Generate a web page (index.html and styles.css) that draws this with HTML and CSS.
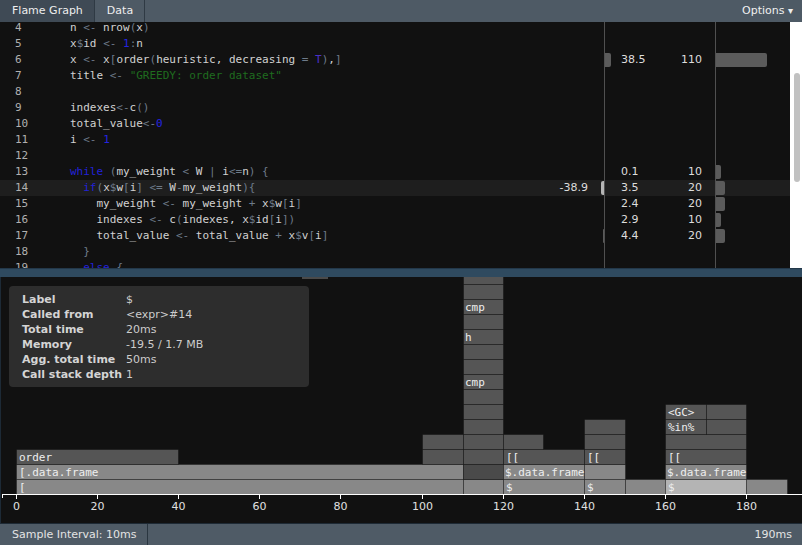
FILE: index.html
```html
<!DOCTYPE html>
<html>
<head>
<meta charset="utf-8">
<title>profvis</title>
<link rel="stylesheet" href="styles.css">
</head>
<body>
<div class="app">
  <header class="topbar">
    <div class="tab active">Flame Graph</div>
    <div class="tab">Data</div>
    <div class="options">Options <span class="caret">▾</span></div>
  </header>

  <section class="code-pane">
    <div class="code-scroll">
      <div class="rows">
        <div class="row"><span class="ln">4</span><span class="code">n <span class="op">&lt;-</span> nrow<span class="op">(</span>x<span class="op">)</span></span><span class="mneg"></span><span class="nbar"></span><span class="pbar"></span><span class="mval"></span><span class="tval"></span><span class="sp"></span><span class="tbar"></span></div>
        <div class="row"><span class="ln">5</span><span class="code">x<span class="op">$</span>id <span class="op">&lt;-</span> <span class="num">1</span><span class="op">:</span>n</span><span class="mneg"></span><span class="nbar"></span><span class="pbar"></span><span class="mval"></span><span class="tval"></span><span class="sp"></span><span class="tbar"></span></div>
        <div class="row"><span class="ln">6</span><span class="code">x <span class="op">&lt;-</span> x<span class="op">[</span>order<span class="op">(</span>heuristic, decreasing <span class="op">=</span> <span class="const">T</span><span class="op">)</span>,<span class="op">]</span></span><span class="mneg"></span><span class="nbar"></span><span class="pbar"><i class="bar pos" style="width:6px"></i></span><span class="mval">38.5</span><span class="tval">110</span><span class="sp"></span><span class="tbar"><i class="bar" style="width:51px"></i></span></div>
        <div class="row"><span class="ln">7</span><span class="code">title <span class="op">&lt;-</span> <span class="str">"GREEDY: order dataset"</span></span><span class="mneg"></span><span class="nbar"></span><span class="pbar"></span><span class="mval"></span><span class="tval"></span><span class="sp"></span><span class="tbar"></span></div>
        <div class="row"><span class="ln">8</span><span class="code"></span><span class="mneg"></span><span class="nbar"></span><span class="pbar"></span><span class="mval"></span><span class="tval"></span><span class="sp"></span><span class="tbar"></span></div>
        <div class="row"><span class="ln">9</span><span class="code">indexes<span class="op">&lt;-</span>c<span class="op">()</span></span><span class="mneg"></span><span class="nbar"></span><span class="pbar"></span><span class="mval"></span><span class="tval"></span><span class="sp"></span><span class="tbar"></span></div>
        <div class="row"><span class="ln">10</span><span class="code">total_value<span class="op">&lt;-</span><span class="num">0</span></span><span class="mneg"></span><span class="nbar"></span><span class="pbar"></span><span class="mval"></span><span class="tval"></span><span class="sp"></span><span class="tbar"></span></div>
        <div class="row"><span class="ln">11</span><span class="code">i <span class="op">&lt;-</span> <span class="num">1</span></span><span class="mneg"></span><span class="nbar"></span><span class="pbar"></span><span class="mval"></span><span class="tval"></span><span class="sp"></span><span class="tbar"></span></div>
        <div class="row"><span class="ln">12</span><span class="code"></span><span class="mneg"></span><span class="nbar"></span><span class="pbar"></span><span class="mval"></span><span class="tval"></span><span class="sp"></span><span class="tbar"></span></div>
        <div class="row"><span class="ln">13</span><span class="code"><span class="kw">while</span> <span class="op">(</span>my_weight <span class="op">&lt;</span> W <span class="op">|</span> i<span class="op">&lt;=</span>n<span class="op">)</span> <span class="op">{</span></span><span class="mneg"></span><span class="nbar"></span><span class="pbar"></span><span class="mval">0.1</span><span class="tval">10</span><span class="sp"></span><span class="tbar"><i class="bar" style="width:5px"></i></span></div>
        <div class="row hl"><span class="ln">14</span><span class="code">  <span class="kw">if</span><span class="op">(</span>x<span class="op">$</span>w<span class="op">[</span>i<span class="op">]</span> <span class="op">&lt;=</span> W<span class="op">-</span>my_weight<span class="op">){</span></span><span class="mneg">-38.9</span><span class="nbar"><i class="bar neg light" style="width:3px"></i></span><span class="pbar"></span><span class="mval">3.5</span><span class="tval">20</span><span class="sp"></span><span class="tbar"><i class="bar" style="width:9px"></i></span></div>
        <div class="row"><span class="ln">15</span><span class="code">    my_weight <span class="op">&lt;-</span> my_weight <span class="op">+</span> x<span class="op">$</span>w<span class="op">[</span>i<span class="op">]</span></span><span class="mneg"></span><span class="nbar"></span><span class="pbar"></span><span class="mval">2.4</span><span class="tval">20</span><span class="sp"></span><span class="tbar"><i class="bar" style="width:9px"></i></span></div>
        <div class="row"><span class="ln">16</span><span class="code">    indexes <span class="op">&lt;-</span> c<span class="op">(</span>indexes, x<span class="op">$</span>id<span class="op">[</span>i<span class="op">])</span></span><span class="mneg"></span><span class="nbar"></span><span class="pbar"></span><span class="mval">2.9</span><span class="tval">10</span><span class="sp"></span><span class="tbar"><i class="bar" style="width:5px"></i></span></div>
        <div class="row"><span class="ln">17</span><span class="code">    total_value <span class="op">&lt;-</span> total_value <span class="op">+</span> x<span class="op">$</span>v<span class="op">[</span>i<span class="op">]</span></span><span class="mneg"></span><span class="nbar"><i class="bar neg" style="width:1px"></i></span><span class="pbar"></span><span class="mval">4.4</span><span class="tval">20</span><span class="sp"></span><span class="tbar"><i class="bar" style="width:9px"></i></span></div>
        <div class="row"><span class="ln">18</span><span class="code">  <span class="op">}</span></span><span class="mneg"></span><span class="nbar"></span><span class="pbar"></span><span class="mval"></span><span class="tval"></span><span class="sp"></span><span class="tbar"></span></div>
        <div class="row"><span class="ln">19</span><span class="code">  <span class="kw">else</span> <span class="op">{</span></span><span class="mneg"></span><span class="nbar"></span><span class="pbar"></span><span class="mval"></span><span class="tval"></span><span class="sp"></span><span class="tbar"></span></div>
      </div>
    </div>
    <div class="scrollbar"><div class="thumb"></div></div>
  </section>

  <div class="splitter"></div>

  <section class="flame-pane">
    <svg class="flame" width="801" height="246" viewBox="1 0 801 246">
      <g class="blocks">
        <!-- row 0 -->
        <rect class="lt" x="16.5" y="202.5" width="447" height="15"/>
        <rect class="lt" x="463.5" y="202.5" width="40" height="15"/>
        <rect class="lt" x="503.5" y="202.5" width="81" height="15"/>
        <rect class="lt" x="584.5" y="202.5" width="41" height="15"/>
        <rect class="lt" x="625.5" y="202.5" width="40" height="15"/>
        <rect class="hi" x="665.5" y="202.5" width="81" height="15"/>
        <rect class="lt" x="746.5" y="202.5" width="41" height="15"/>
        <!-- row 1 -->
        <rect class="lt" x="16.5" y="187.5" width="447" height="15"/>
        <rect class="dd" x="463.5" y="187.5" width="40" height="15"/>
        <rect class="lt" x="503.5" y="187.5" width="81" height="15"/>
        <rect class="lt" x="584.5" y="187.5" width="41" height="15"/>
        <rect class="lt" x="665.5" y="187.5" width="81" height="15"/>
        <!-- row 2 -->
        <rect class="dk" x="16.5" y="172.5" width="162" height="15"/>
        <rect class="dk" x="422.5" y="172.5" width="41" height="15"/>
        <rect class="dk" x="463.5" y="172.5" width="40" height="15"/>
        <rect class="dk" x="503.5" y="172.5" width="81" height="15"/>
        <rect class="dk" x="584.5" y="172.5" width="41" height="15"/>
        <rect class="dk" x="665.5" y="172.5" width="81" height="15"/>
        <!-- row 3 -->
        <rect class="dk" x="422.5" y="157.5" width="41" height="15"/>
        <rect class="dk" x="463.5" y="157.5" width="40" height="15"/>
        <rect class="dk" x="503.5" y="157.5" width="40" height="15"/>
        <rect class="dk" x="584.5" y="157.5" width="41" height="15"/>
        <rect class="dk" x="665.5" y="157.5" width="81" height="15"/>
        <!-- row 4 -->
        <rect class="dk" x="463.5" y="142.5" width="40" height="15"/>
        <rect class="dk" x="584.5" y="142.5" width="41" height="15"/>
        <rect class="dk" x="665.5" y="142.5" width="41" height="15"/>
        <rect class="dk" x="706.5" y="142.5" width="40" height="15"/>
        <!-- row 5 -->
        <rect class="dk" x="463.5" y="127.5" width="40" height="15"/>
        <rect class="dk" x="665.5" y="127.5" width="41" height="15"/>
        <rect class="dk" x="706.5" y="127.5" width="40" height="15"/>
        <!-- rows 6..14 -->
        <rect class="dk" x="463.5" y="112.5" width="40" height="15"/>
        <rect class="dk" x="463.5" y="97.5" width="40" height="15"/>
        <rect class="dk" x="463.5" y="82.5" width="40" height="15"/>
        <rect class="dk" x="463.5" y="67.5" width="40" height="15"/>
        <rect class="dk" x="463.5" y="52.5" width="40" height="15"/>
        <rect class="dk" x="463.5" y="37.5" width="40" height="15"/>
        <rect class="dk" x="463.5" y="22.5" width="40" height="15"/>
        <rect class="dk" x="463.5" y="7.5" width="40" height="15"/>
        <rect class="dk" x="463.5" y="-7.5" width="40" height="15"/>
      </g>
      <g class="labels">
        <text x="19" y="213.5">[</text>
        <text x="506" y="213.5">$</text>
        <text x="587" y="213.5">$</text>
        <text x="668" y="213.5">$</text>
        <text x="19" y="198.5">[.data.frame</text>
        <text x="505" y="198.5">$.data.frame</text>
        <text x="667" y="198.5">$.data.frame</text>
        <text x="19" y="183.5">order</text>
        <text x="506" y="183.5">[[</text>
        <text x="587" y="183.5">[[</text>
        <text x="668" y="183.5">[[</text>
        <text x="668" y="153.5">%in%</text>
        <text x="668" y="138.5">&lt;GC&gt;</text>
        <text x="465" y="108.5">cmp</text>
        <text x="465" y="63.5">h</text>
        <text x="465" y="33.5">cmp</text>
      </g>
      <g class="axis">
        <line class="axis-line" x1="2" y1="217.5" x2="802" y2="217.5"/>
        <line x1="2.5" y1="217" x2="2.5" y2="221"/>
        <line x1="16.5" y1="217" x2="16.5" y2="222"/>
        <line x1="97.5" y1="217" x2="97.5" y2="222"/>
        <line x1="178.5" y1="217" x2="178.5" y2="222"/>
        <line x1="259.5" y1="217" x2="259.5" y2="222"/>
        <line x1="340.5" y1="217" x2="340.5" y2="222"/>
        <line x1="422.5" y1="217" x2="422.5" y2="222"/>
        <line x1="503.5" y1="217" x2="503.5" y2="222"/>
        <line x1="584.5" y1="217" x2="584.5" y2="222"/>
        <line x1="665.5" y1="217" x2="665.5" y2="222"/>
        <line x1="746.5" y1="217" x2="746.5" y2="222"/>
        <text x="16.5" y="233">0</text>
        <text x="97.5" y="233">20</text>
        <text x="178.5" y="233">40</text>
        <text x="259.5" y="233">60</text>
        <text x="340.5" y="233">80</text>
        <text x="422.5" y="233">100</text>
        <text x="503.5" y="233">120</text>
        <text x="584.5" y="233">140</text>
        <text x="665.5" y="233">160</text>
        <text x="746.5" y="233">180</text>
      </g>
    </svg>

    <div class="grip"></div>

    <div class="tooltip">
      <span class="k">Label</span><span class="v">$</span>
      <span class="k">Called from</span><span class="v">&lt;expr&gt;#14</span>
      <span class="k">Total time</span><span class="v">20ms</span>
      <span class="k">Memory</span><span class="v">-19.5 / 1.7 MB</span>
      <span class="k">Agg. total time</span><span class="v">50ms</span>
      <span class="k">Call stack depth</span><span class="v">1</span>
    </div>
  </section>

  <footer class="statusbar">
    <div class="interval">Sample Interval: 10ms</div>
    <div class="total">190ms</div>
  </footer>
</div>
</body>
</html>
```

FILE: styles.css
```css
* { box-sizing: border-box; }

html, body {
  margin: 0;
  padding: 0;
  background: #111111;
}

body {
  font-family: "DejaVu Sans", "Liberation Sans", sans-serif;
  font-size: 11px;
  color: #dddddd;
}

.app {
  width: 802px;
  height: 545px;
  display: flex;
  flex-direction: column;
  overflow: hidden;
}

/* ---------- top bar ---------- */
.topbar {
  height: 22px;
  flex: 0 0 22px;
  display: flex;
  align-items: stretch;
  background: #4e5a65;
  color: #eeeeee;
  line-height: 22px;
}

.tab {
  padding: 0 11px 0 12px;
  border-right: 1px solid #2f3a44;
}

.tab.active {
  background: #3f4a55;
}

.options {
  margin-left: auto;
  padding-right: 9px;
  color: #f0f0f0;
}

.caret {
  font-size: 10px;
}

/* ---------- code pane ---------- */
.code-pane {
  height: 246px;
  flex: 0 0 246px;
  display: flex;
  background: #111111;
  overflow: hidden;
}

.code-scroll {
  flex: 1;
  overflow: hidden;
}

.rows {
  margin-top: -2px;
}

.row {
  display: grid;
  grid-template-columns: 70px 470px 50px 14px 14px 44px 42px 11px 75px;
  height: 16px;
  line-height: 16px;
  font-family: "DejaVu Sans Mono", "Liberation Mono", monospace;
  font-size: 11px;
  color: #d2d2d2;
}

.row.hl {
  background: #1e1e1e;
}

.ln {
  padding-left: 15px;
  color: #b0b0b0;
}

.code {
  white-space: pre;
  overflow: visible;
}

.op { color: #6d7a89; }
.num { color: #2424e0; }
.kw { color: #2222d8; }
.str { color: #1f6c1f; }
.const { color: #4a30c8; }

.mneg {
  text-align: right;
  padding-right: 2px;
  font-family: "DejaVu Sans", sans-serif;
  color: #dddddd;
}

.nbar {
  display: flex;
  justify-content: flex-end;
  align-items: center;
}

.pbar {
  display: flex;
  align-items: center;
  border-left: 1px solid #505050;
}

.mval {
  padding-left: 3px;
  font-family: "DejaVu Sans", sans-serif;
  color: #dddddd;
}

.tval {
  text-align: right;
  padding-right: 2px;
  font-family: "DejaVu Sans", sans-serif;
  color: #dddddd;
}

.tbar {
  display: flex;
  align-items: center;
  border-left: 1px solid #505050;
}

.bar {
  display: block;
  height: 14px;
  background: #5b5b5b;
  border-radius: 0 2px 2px 0;
}

.bar.neg {
  border-radius: 2px 0 0 2px;
}

.bar.light {
  background: #b5b5b5;
}

.scrollbar {
  width: 12px;
  flex: 0 0 12px;
  background: #ffffff;
  padding: 51px 2px 0 4px;
}

.thumb {
  width: 6px;
  height: 109px;
  background: #c1c1c1;
  border-radius: 3px;
}

/* ---------- splitter ---------- */
.splitter {
  height: 9px;
  flex: 0 0 9px;
  background: #2f4a5f;
  border-top: 1px solid #23384a;
}

/* ---------- flame pane ---------- */
.flame-pane {
  position: relative;
  height: 246px;
  flex: 0 0 246px;
  background: #111111;
  border-left: 1px solid #1d2a36;
  overflow: hidden;
}

.flame {
  display: block;
}

.grip {
  position: absolute;
  left: 301px;
  top: 0;
  width: 26px;
  height: 2px;
  background: #4a4a4a;
}

.blocks rect {
  stroke: rgba(0, 0, 0, 0.3);
  stroke-width: 1;
}

.blocks .lt { fill: #888888; }
.blocks .dk { fill: #555555; }
.blocks .dd { fill: #4a4a4a; }
.blocks .hi { fill: #b4b4b4; }

.labels text {
  font-family: "DejaVu Sans Mono", "Liberation Mono", monospace;
  font-size: 11px;
  fill: #eeeeee;
}

.axis line {
  stroke: #ffffff;
  stroke-width: 1;
}

.axis text {
  font-family: "DejaVu Sans", sans-serif;
  font-size: 11px;
  fill: #e0e0e0;
  text-anchor: middle;
}

.tooltip {
  position: absolute;
  left: 8px;
  top: 9px;
  width: 300px;
  height: 101px;
  padding: 6px 13px 5px;
  background: #2d2d2d;
  border-radius: 4px;
  display: grid;
  grid-template-columns: 104px 1fr;
  grid-auto-rows: 15px;
  line-height: 15px;
}

.tooltip .k {
  font-weight: bold;
  color: #d4d4d4;
}

.tooltip .v {
  color: #cccccc;
}

/* ---------- status bar ---------- */
.statusbar {
  height: 22px;
  flex: 0 0 22px;
  display: flex;
  align-items: stretch;
  background: #4f5b66;
  border-top: 1px solid #1e2a35;
  line-height: 21px;
  color: #e4e4e4;
}

.interval {
  width: 148px;
  padding-left: 12px;
  border-right: 1px solid #2a3640;
}

.total {
  margin-left: auto;
  padding-right: 10px;
}
```
